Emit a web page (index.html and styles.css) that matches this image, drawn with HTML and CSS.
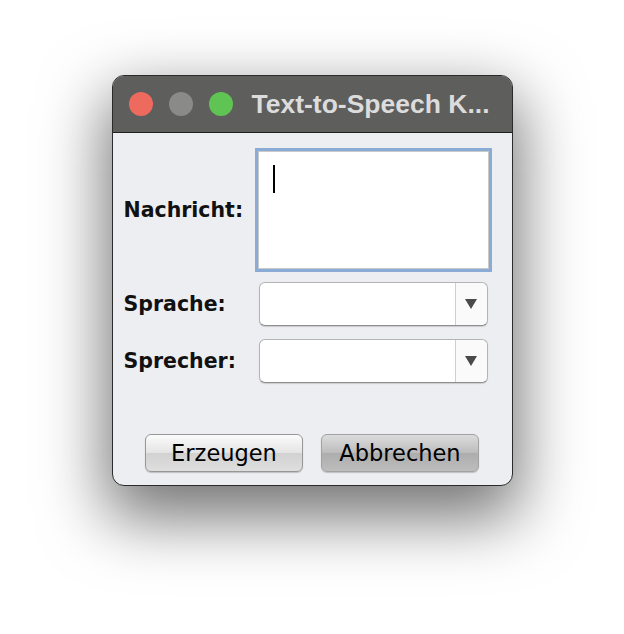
FILE: index.html
```html
<!DOCTYPE html>
<html lang="de">
<head>
    <meta charset="UTF-8">
    <meta name="viewport" content="width=device-width, initial-scale=1.0">
    <title>Text-to-Speech Konverter</title>
    <link rel="stylesheet" href="styles.css">
</head>
<body>
    <div class="window">
        <div class="titlebar">
            <span class="light red"></span>
            <span class="light gray"></span>
            <span class="light green"></span>
            <span class="title">Text-to-Speech K...</span>
        </div>
        <div class="content">
            <div class="form">
                <label class="label" for="message">Nachricht:</label>
                <div class="textarea" id="message"><span class="caret"></span></div>

                <label class="label">Sprache:</label>
                <div class="combo">
                    <span class="combo-value"></span>
                    <span class="combo-arrow"></span>
                </div>

                <label class="label">Sprecher:</label>
                <div class="combo">
                    <span class="combo-value"></span>
                    <span class="combo-arrow"></span>
                </div>
            </div>
            <div class="buttons">
                <button class="btn">Erzeugen</button>
                <button class="btn btn-default">Abbrechen</button>
            </div>
        </div>
    </div>
</body>
</html>
```

FILE: styles.css
```css
html {
    height: 100%;
}
body {
    margin: 0;
    min-height: 100%;
    box-sizing: border-box;
    padding-top: 75px;
    background: #ffffff;
    font-family: "DejaVu Sans", "Liberation Sans", sans-serif;
}
.window {
    width: 399px;
    margin: 0 auto;
    border: 1px solid #2b2b2b;
    border-radius: 12px;
    overflow: hidden;
    background: #edeef2;
    box-shadow: 0 26px 65px 6px rgba(0, 0, 0, 0.55);
}
.titlebar {
    height: 56px;
    background: #5e5e5c;
    border-bottom: 1px solid #1f1f1f;
    display: flex;
    align-items: center;
    padding-left: 16px;
    gap: 16px;
}
.light {
    width: 24px;
    height: 24px;
    border-radius: 50%;
}
.red { background: #ee6a5f; }
.gray { background: #8a8a89; }
.green { background: #5fc454; }
.title {
    margin-left: 3px;
    font-family: "Liberation Sans", Arial, sans-serif;
    font-weight: bold;
    font-size: 26.5px;
    color: #dcdcdc;
    white-space: nowrap;
}
.content {
    padding: 17px 0 13px 11px;
}
.form {
    display: grid;
    grid-template-columns: 135px 229px;
    row-gap: 13px;
    align-items: center;
}
.label {
    font-weight: bold;
    font-size: 20.5px;
    color: #111;
}
.textarea {
    width: 229px;
    height: 116px;
    margin: 1px 0 0 -1px;
    background: #fff;
    border: 1px solid #c9c9c9;
    box-shadow: 0 0 0 3px #8aabd6;
    position: relative;
}
.caret {
    position: absolute;
    left: 14px;
    top: 13px;
    width: 2px;
    height: 28px;
    background: #000;
}
.combo {
    height: 42px;
    display: flex;
    background: #fff;
    border: 1px solid #b4b4b4;
    border-bottom-color: #8e8e8e;
    border-radius: 6px;
    box-shadow: 0 1px 1px rgba(0, 0, 0, 0.15);
}
.combo-value {
    flex: 1;
}
.combo-arrow {
    width: 31px;
    border-left: 1px solid #cfcfcf;
    background: #fafafa;
    border-radius: 0 6px 6px 0;
    display: flex;
    align-items: center;
    justify-content: center;
}
.combo-arrow::before {
    content: "";
    border-left: 6px solid transparent;
    border-right: 6px solid transparent;
    border-top: 10px solid #4a4a4a;
}
.buttons {
    display: flex;
    justify-content: center;
    gap: 18px;
    margin-top: 51px;
    margin-left: -11px;
}
.btn {
    width: 158px;
    height: 38px;
    font-family: "DejaVu Sans", "Liberation Sans", sans-serif;
    font-size: 22.5px;
    color: #000;
    border: 1px solid #979797;
    border-radius: 6px;
    background: linear-gradient(#fbfbfb, #e4e4e4 50%, #d2d2d2 51%, #dedede);
    box-shadow: 0 1px 1px rgba(0, 0, 0, 0.2);
    padding: 0;
}
.btn-default {
    border-color: #a2a2a2;
    background: linear-gradient(#dcdcdc, #bcbcbc 50%, #adadad 51%, #bdbdbd);
}
```
